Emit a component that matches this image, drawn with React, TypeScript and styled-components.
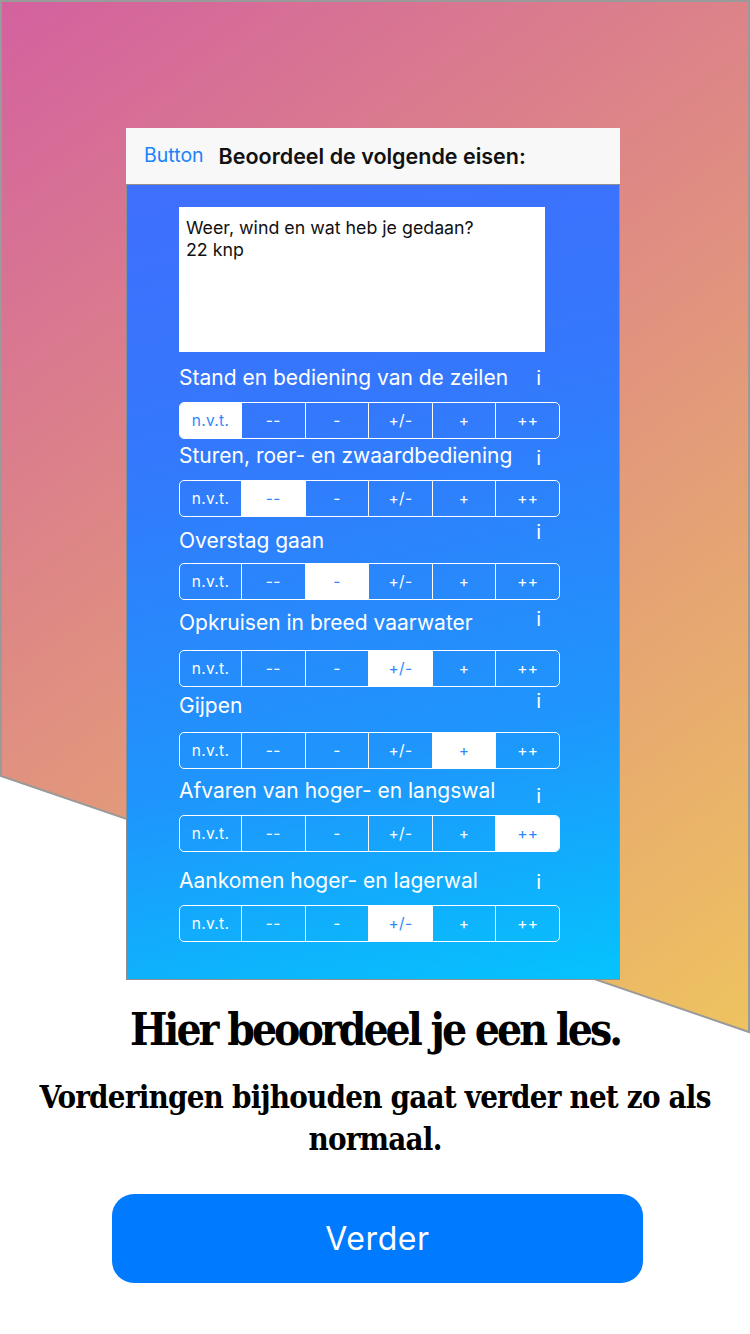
import React from "react";
import styled, { createGlobalStyle } from "styled-components";

const GlobalStyle = createGlobalStyle`
  html, body {
    margin: 0;
    padding: 0;
    background: #ffffff;
  }
  body {
    font-family: Inter, "Liberation Sans", sans-serif;
  }
`;

const Page = styled.div`
  position: relative;
  width: 750px;
  height: 1334px;
  overflow: hidden;
  display: flex;
  flex-direction: column;
  align-items: center;
  padding-top: 128px;
  box-sizing: border-box;
`;

const Backdrop = styled.svg`
  position: absolute;
  top: 0;
  left: 0;
  z-index: 0;
`;

const Phone = styled.div`
  position: relative;
  z-index: 1;
  width: 494px;
  margin-right: 4px;
  display: flex;
  flex-direction: column;
`;

const NavBar = styled.div`
  height: 56px;
  background: #f8f8f8;
  border-bottom: 1px solid #8f8f8f;
  display: flex;
  align-items: center;
  padding-left: 18px;
  gap: 15px;
`;

const NavButton = styled.span`
  font-size: 19.5px;
  color: #1a82fb;
  margin-top: -3px;
`;

const NavTitle = styled.span`
  font-size: 21.5px;
  font-weight: 600;
  color: #111;
`;

const Screen = styled.div`
  height: 795px;
  box-sizing: border-box;
  border: 1px solid #8f8f8f;
  border-top: none;
  background: linear-gradient(168deg, #3f6ffd 0%, #3478fc 30%, #1e96fc 70%, #05c3fd 100%);
  padding: 22px 59px 0 52px;
  display: flex;
  flex-direction: column;
`;

const NoteBox = styled.div`
  width: 366px;
  height: 145px;
  box-sizing: border-box;
  background: #fff;
  padding: 10px 7px;
  font-size: 17.8px;
  line-height: 22px;
  color: #111;
  white-space: pre-line;
`;

const Criterion = styled.div<{ $top: number; $mid: number }>`
  margin-top: ${({ $top }) => $top}px;
  display: flex;
  flex-direction: column;
  gap: ${({ $mid }) => $mid}px;
`;

const Header = styled.div`
  height: 24px;
  display: flex;
  align-items: flex-start;
`;

const Label = styled.span`
  font-size: 21px;
  line-height: 24px;
  color: #fff;
  white-space: nowrap;
`;

const Info = styled.span<{ $shift: number }>`
  margin-left: auto;
  margin-right: 19px;
  margin-top: ${({ $shift }) => $shift}px;
  font-size: 20px;
  line-height: 24px;
  color: #fff;
`;

const Segmented = styled.div`
  height: 37px;
  box-sizing: border-box;
  border: 1px solid #fff;
  border-radius: 5px;
  overflow: hidden;
  display: grid;
  grid-template-columns: 61px repeat(5, 1fr);
`;

const Segment = styled.div<{ $active: boolean }>`
  display: flex;
  align-items: center;
  justify-content: center;
  font-size: 15.5px;
  letter-spacing: 0.3px;
  color: ${({ $active }) => ($active ? "#2c88fc" : "#fff")};
  background: ${({ $active }) => ($active ? "#fff" : "transparent")};
  & + & {
    border-left: 1px solid #fff;
  }
`;

const Heading = styled.h1`
  position: relative;
  z-index: 1;
  margin: 24px 0 0;
  font-family: "DejaVu Serif", "Liberation Serif", serif;
  font-stretch: condensed;
  font-weight: 700;
  font-size: 44px;
  line-height: 52px;
  letter-spacing: -3px;
  color: #000;
  text-align: center;
`;

const SubHeading = styled.p`
  margin: 20px 0 0;
  width: 700px;
  font-family: "DejaVu Serif", "Liberation Serif", serif;
  font-stretch: condensed;
  font-weight: 700;
  font-size: 31px;
  line-height: 42px;
  letter-spacing: -0.8px;
  color: #000;
  text-align: center;
`;

const NextButton = styled.button`
  margin-top: 34px;
  margin-left: 5px;
  width: 531px;
  height: 89px;
  border: none;
  border-radius: 22px;
  background: #007aff;
  color: #fff;
  font-family: Inter, "Liberation Sans", sans-serif;
  font-size: 32px;
  font-weight: 400;
  letter-spacing: 0.6px;
`;

const options = ["n.v.t.", "--", "-", "+/-", "+", "++"];

const criteria = [
  { label: "Stand en bediening van de zeilen", value: 0, top: 14, mid: 12, shift: 0 },
  { label: "Sturen, roer- en zwaardbediening", value: 1, top: 5, mid: 12, shift: 2 },
  { label: "Overstag gaan", value: 2, top: 12, mid: 10, shift: -9 },
  { label: "Opkruisen in breed vaarwater", value: 3, top: 11, mid: 15, shift: -4 },
  { label: "Gijpen", value: 4, top: 7, mid: 14, shift: -5 },
  { label: "Afvaren van hoger- en langswal", value: 5, top: 10, mid: 12, shift: 5 },
  { label: "Aankomen hoger- en lagerwal", value: 3, top: 17, mid: 12, shift: 1 },
];

const App: React.FC = () => {
  return (
    <>
      <GlobalStyle />
      <Page>
        <Backdrop width="750" height="1334" viewBox="0 0 750 1334">
          <defs>
            <linearGradient id="bg" gradientUnits="userSpaceOnUse" x1="0" y1="0" x2="750" y2="1032">
              <stop offset="0" stopColor="#d3619f" />
              <stop offset="1" stopColor="#eec35f" />
            </linearGradient>
          </defs>
          <polygon points="1,1 749,1 749,1032 1,776" fill="url(#bg)" stroke="#9a9a9a" strokeWidth="2" />
        </Backdrop>

        <Phone>
          <NavBar>
            <NavButton>Button</NavButton>
            <NavTitle>Beoordeel de volgende eisen:</NavTitle>
          </NavBar>
          <Screen>
            <NoteBox>{"Weer, wind en wat heb je gedaan?\n22 knp"}</NoteBox>
            {criteria.map((c) => (
              <Criterion key={c.label} $top={c.top} $mid={c.mid}>
                <Header>
                  <Label>{c.label}</Label>
                  <Info $shift={c.shift}>i</Info>
                </Header>
                <Segmented>
                  {options.map((o, i) => (
                    <Segment key={o} $active={i === c.value}>
                      {o}
                    </Segment>
                  ))}
                </Segmented>
              </Criterion>
            ))}
          </Screen>
        </Phone>

        <Heading>Hier beoordeel je een les.</Heading>
        <SubHeading>Vorderingen bijhouden gaat verder net zo als normaal.</SubHeading>
        <NextButton>Verder</NextButton>
      </Page>
    </>
  );
};

export default App;
